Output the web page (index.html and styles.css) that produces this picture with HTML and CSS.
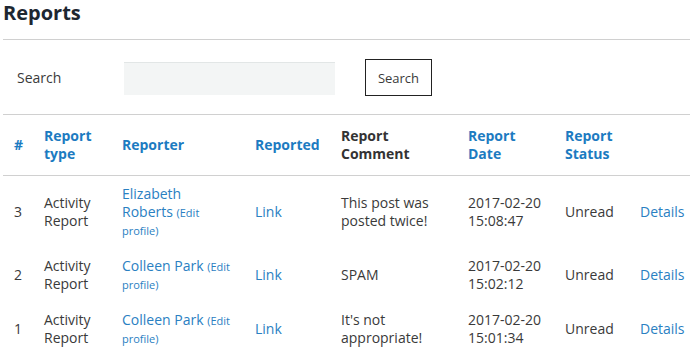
FILE: index.html
```html
<!DOCTYPE html>
<html lang="en">
<head>
    <meta charset="UTF-8">
    <title>Reports</title>
    <link rel="stylesheet" href="styles.css">
</head>
<body>
    <div class="wrap">
        <h1 class="page-title">Reports</h1>

        <form class="search-bar">
            <label class="search-label" for="q">Search</label>
            <input type="text" id="q" class="search-input">
            <button type="button" class="btn-search">Search</button>
        </form>

        <table class="reports">
            <colgroup>
                <col class="c-num">
                <col class="c-type">
                <col class="c-reporter">
                <col class="c-reported">
                <col class="c-comment">
                <col class="c-date">
                <col class="c-status">
                <col class="c-actions">
            </colgroup>
            <thead>
                <tr>
                    <th><a href="#">#</a></th>
                    <th><a href="#">Report type</a></th>
                    <th><a href="#">Reporter</a></th>
                    <th><a href="#">Reported</a></th>
                    <th>Report Comment</th>
                    <th><a href="#">Report Date</a></th>
                    <th><a href="#">Report Status</a></th>
                    <th></th>
                </tr>
            </thead>
            <tbody>
                <tr>
                    <td>3</td>
                    <td>Activity Report</td>
                    <td class="reporter"><a href="#">Elizabeth Roberts</a> <a href="#" class="edit">(Edit profile)</a></td>
                    <td><a href="#">Link</a></td>
                    <td>This post was posted twice!</td>
                    <td>2017-02-20 15:08:47</td>
                    <td>Unread</td>
                    <td><a href="#">Details</a></td>
                </tr>
                <tr>
                    <td>2</td>
                    <td>Activity Report</td>
                    <td class="reporter"><a href="#">Colleen Park</a> <a href="#" class="edit">(Edit profile)</a></td>
                    <td><a href="#">Link</a></td>
                    <td>SPAM</td>
                    <td>2017-02-20 15:02:12</td>
                    <td>Unread</td>
                    <td><a href="#">Details</a></td>
                </tr>
                <tr>
                    <td>1</td>
                    <td>Activity Report</td>
                    <td class="reporter"><a href="#">Colleen Park</a> <a href="#" class="edit">(Edit profile)</a></td>
                    <td><a href="#">Link</a></td>
                    <td>It's not appropriate!</td>
                    <td>2017-02-20 15:01:34</td>
                    <td>Unread</td>
                    <td><a href="#">Details</a></td>
                </tr>
            </tbody>
        </table>
    </div>
</body>
</html>
```

FILE: styles.css
```css
* {
    margin: 0;
    padding: 0;
    box-sizing: border-box;
}

body {
    font-family: 'Open Sans', 'Liberation Sans', sans-serif;
    font-size: 14px;
    color: #3a3a3a;
    background: white;
}

a {
    color: #2a80c2;
    text-decoration: none;
}

.wrap {
    padding: 0 0 0 3px;
    width: 693px;
}

.page-title {
    font-size: 20px;
    line-height: 23px;
    font-weight: 700;
    color: #1d2731;
    padding-top: 1px;
    padding-bottom: 15px;
    border-bottom: 1px solid #d0d0d0;
}

/* Barra de busca */
.search-bar {
    display: flex;
    align-items: center;
    padding: 19px 0 18px 14px;
    border-bottom: 1px solid #d0d0d0;
}

.search-label {
    width: 107px;
    color: #3a3a3a;
}

.search-input {
    width: 211px;
    height: 33px;
    border: none;
    border-top: 1px solid #e2e6e6;
    background: #f3f5f5;
    margin-top: 1px;
}

.btn-search {
    margin-left: 30px;
    width: 67px;
    height: 37px;
    background: white;
    border: 1px solid #222;
    font-family: inherit;
    font-size: 13px;
    color: #3a3a3a;
}

/* Tabela */
.reports {
    border-collapse: collapse;
    table-layout: fixed;
    width: 687px;
}

.c-num { width: 30px; }
.c-type { width: 78px; }
.c-reporter { width: 133px; }
.c-reported { width: 86px; }
.c-comment { width: 127px; }
.c-date { width: 97px; }
.c-status { width: 75px; }
.c-actions { width: 61px; }

.reports th {
    text-align: left;
    font-weight: 700;
    line-height: 18px;
    padding: 12px 6px 12px 11px;
    color: #333;
    border-bottom: 1px solid #d0d0d0;
    vertical-align: middle;
}

.reports th a {
    color: #1c7bc1;
}

.reports td {
    line-height: 18px;
    padding: 9px 4px 9px 11px;
    vertical-align: middle;
}

.reports td.reporter {
    padding-right: 11px;
}

.reports .edit {
    font-size: 11px;
    line-height: 12px;
}
```
